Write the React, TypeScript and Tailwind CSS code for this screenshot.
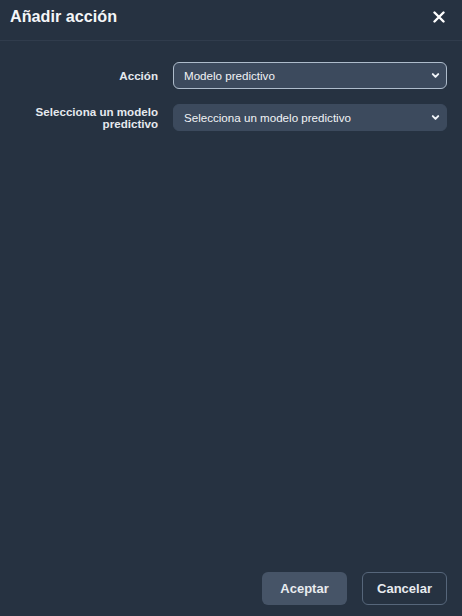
import React from "react";

function Chevron() {
  return (
    <svg width="9" height="9" viewBox="0 0 10 10" className="shrink-0">
      <path d="M2 3.5 L5 6.5 L8 3.5" fill="none" stroke="#f1f5f9" strokeWidth="2.2" strokeLinecap="round" strokeLinejoin="round" />
    </svg>
  );
}

function Field({ label, value, focused }: { label: React.ReactNode; value: string; focused?: boolean }) {
  return (
    <div className="flex items-center gap-[15px]">
      <div className="w-[158px] text-right text-[11.6px] font-bold leading-[12px] text-[#e5e9ee]">{label}</div>
      <div
        className={
          "flex h-[27px] flex-1 items-center justify-between rounded-[6px] bg-[#3c4a5d] pl-[10px] pr-[6px] text-[11.6px] text-[#f1f3f6] " +
          (focused ? "border border-[#aebccb]" : "border border-[#3c4a5d]")
        }
      >
        <span>{value}</span>
        <Chevron />
      </div>
    </div>
  );
}

export default function App() {
  return (
    <div className="flex h-[616px] w-[462px] flex-col bg-[#263241] font-['Liberation_Sans',Arial,sans-serif]">
      <header className="flex h-[41px] items-center justify-between border-b border-[#303c4c] pb-[7px] pl-[10px] pr-[17px]">
        <h1 className="text-[16.2px] font-bold text-[#f4f6f8]">Añadir acción</h1>
        <svg width="12" height="12" viewBox="0 0 12 12">
          <path d="M1.5 1.5 L10.5 10.5 M10.5 1.5 L1.5 10.5" stroke="#ffffff" strokeWidth="2.4" strokeLinecap="round" />
        </svg>
      </header>

      <main className="flex flex-1 flex-col gap-[15px] pr-[15px] pt-[21px]">
        <Field label="Acción" value="Modelo predictivo" focused />
        <Field
          label={
            <>
              Selecciona un modelo
              <br />
              predictivo
            </>
          }
          value="Selecciona un modelo predictivo"
        />
      </main>

      <footer className="flex justify-end gap-[15px] pb-[11px] pr-[15px]">
        <button className="h-[33px] w-[85px] rounded-[6px] bg-[#465467] text-[13px] font-bold text-[#e8ebef]">
          Aceptar
        </button>
        <button className="h-[33px] w-[85px] rounded-[6px] border border-[#56667a] bg-transparent text-[13px] font-bold text-[#e8ebef]">
          Cancelar
        </button>
      </footer>
    </div>
  );
}
